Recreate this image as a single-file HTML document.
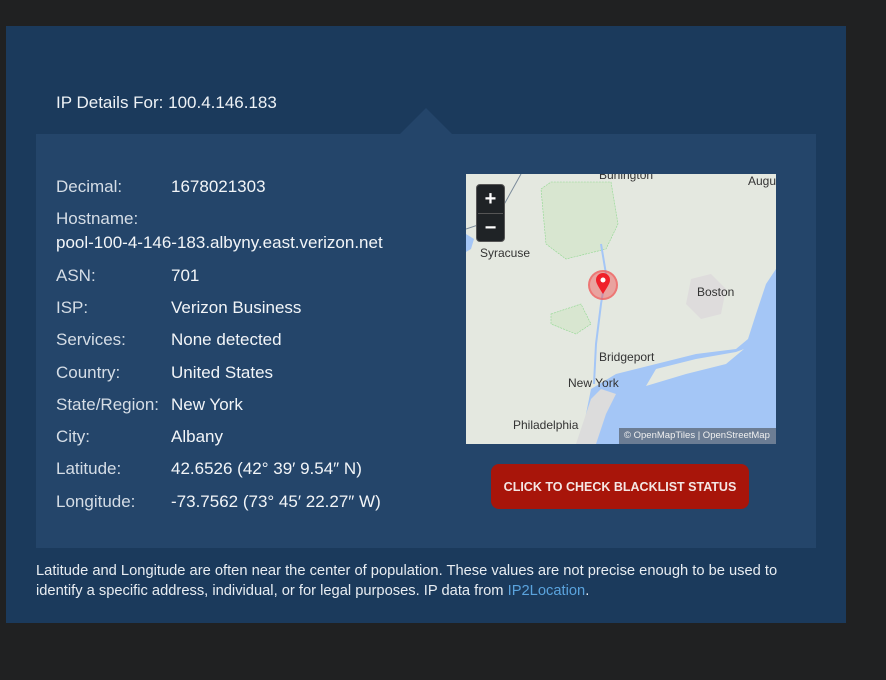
<!DOCTYPE html>
<html><head><meta charset="utf-8"><style>
*{margin:0;padding:0;box-sizing:border-box}
body{width:886px;height:680px;background:#202122;font-family:"Liberation Sans",sans-serif;color:#e6ecf2;position:relative;overflow:hidden}
.panel{position:absolute;left:6px;top:26px;width:840px;height:597px;background:#1b3a5c}
.title{position:absolute;left:56px;top:93px;font-size:17px;color:#eef2f6}
.tri{position:absolute;left:400px;top:108px;width:0;height:0;border-left:26px solid transparent;border-right:26px solid transparent;border-bottom:26px solid #24456a}
.inner{position:absolute;left:36px;top:134px;width:780px;height:414px;background:#24456a}
.r{position:absolute;font-size:17px;white-space:nowrap}
.l{left:56px;color:#d5dde6}
.v{left:171px;color:#f2f5f8}
.map{position:absolute;left:466px;top:174px;width:310px;height:270px;overflow:hidden;background:#e4e8e0}
.btn{position:absolute;left:491px;top:464px;width:258px;height:45px;background:#a8150a;border-radius:8px;color:#f4e6e4;font-weight:bold;font-size:12.5px;text-align:center;line-height:46px}
.note{position:absolute;left:36px;top:561px;width:780px;font-size:14.7px;line-height:20px;color:#e8edf2}
.note span{color:#5aa3dd}
</style></head><body>
<div class="panel"></div>
<div class="title">IP Details For: 100.4.146.183</div>
<div class="tri"></div>
<div class="inner"></div>
<div class="r l" style="top:177px">Decimal:</div><div class="r v" style="top:177px">1678021303</div>
<div class="r l" style="top:209px">Hostname:</div>
<div class="r l" style="top:233px;color:#f2f5f8">pool-100-4-146-183.albyny.east.verizon.net</div>
<div class="r l" style="top:266px">ASN:</div><div class="r v" style="top:266px">701</div>
<div class="r l" style="top:298px">ISP:</div><div class="r v" style="top:298px">Verizon Business</div>
<div class="r l" style="top:330px">Services:</div><div class="r v" style="top:330px">None detected</div>
<div class="r l" style="top:363px">Country:</div><div class="r v" style="top:363px">United States</div>
<div class="r l" style="top:395px">State/Region:</div><div class="r v" style="top:395px">New York</div>
<div class="r l" style="top:427px">City:</div><div class="r v" style="top:427px">Albany</div>
<div class="r l" style="top:459px">Latitude:</div><div class="r v" style="top:459px">42.6526 (42° 39′ 9.54″ N)</div>
<div class="r l" style="top:492px">Longitude:</div><div class="r v" style="top:492px">-73.7562 (73° 45′ 22.27″ W)</div>
<div class="map">
<svg width="310" height="270" viewBox="0 0 310 270">
<path d="M310 95 L300 110 L290 140 L282 165 L270 175 L230 180 L190 190 L150 200 L125 215 L120 240 L115 270 L310 270 Z" fill="#a4c6f6"/>
<path d="M190 195 L230 185 L270 178 L278 175 L260 190 L220 200 L180 212 Z" fill="#e4e8e0"/>
<path d="M125 225 L135 215 L150 220 L140 240 L130 270 L110 270 Z" fill="#dcdcdc"/>
<path d="M225 105 L245 100 L260 115 L255 140 L235 145 L220 130 Z" fill="#dedcdc"/>
<path d="M75 15 L85 8 L145 8 L152 50 L140 75 L100 85 L80 70 Z" fill="#d8e6d0" stroke="#8fd88f" stroke-width="0.6" stroke-dasharray="2 1"/>
<path d="M85 140 L115 130 L125 150 L110 160 L85 150 Z" fill="#d8e6d0" stroke="#8fd88f" stroke-width="0.6" stroke-dasharray="2 1"/>
<path d="M135 70 L140 100 L135 130 L130 170 L128 210" stroke="#a4c6f6" stroke-width="2" fill="none"/>
<path d="M0 55 L30 45 L55 0" stroke="#7a8a9a" stroke-width="1" fill="none"/>
<path d="M0 60 L8 65 L5 75 L0 78 Z" fill="#a4c6f6"/>
</svg>
<div style="position:absolute;left:10px;top:10px;width:29px;height:58px;background:#1f2326;border-radius:4px;border:1px solid #555"></div>
<div style="position:absolute;left:10px;top:11px;width:29px;height:28px;color:#fff;font-weight:bold;font-size:20px;text-align:center;line-height:28px">+</div>
<div style="position:absolute;left:12px;top:39px;width:25px;height:1px;background:#555"></div>
<div style="position:absolute;left:10px;top:40px;width:29px;height:28px;color:#fff;font-weight:bold;font-size:20px;text-align:center;line-height:28px">−</div>
<div style="position:absolute;left:122px;top:96px;width:30px;height:30px;border-radius:50%;background:rgba(240,80,80,.45);border:2px solid rgba(240,90,90,.6)"></div>
<svg style="position:absolute;left:129px;top:99px" width="16" height="22" viewBox="0 0 16 22"><path d="M8 21 C3 13 1 10 1 7 A7 7 0 0 1 15 7 C15 10 13 13 8 21Z" fill="#f0202a"/><circle cx="8" cy="7" r="2.5" fill="#fff"/></svg>
<div style="position:absolute;left:133px;top:-6px;font-size:12px;color:#333">Burlington</div>
<div style="position:absolute;left:282px;top:0px;font-size:12px;color:#333">Augu</div>
<div style="position:absolute;left:14px;top:72px;font-size:12px;color:#333">Syracuse</div>
<div style="position:absolute;left:231px;top:111px;font-size:12px;color:#333">Boston</div>
<div style="position:absolute;left:133px;top:176px;font-size:12px;color:#333">Bridgeport</div>
<div style="position:absolute;left:102px;top:202px;font-size:12px;color:#333">New York</div>
<div style="position:absolute;left:47px;top:244px;font-size:12px;color:#333">Philadelphia</div>
<div style="position:absolute;left:153px;top:254px;width:157px;height:16px;background:rgba(90,100,115,.75);color:#f0f0f0;font-size:9.5px;line-height:16px;padding-left:5px">© OpenMapTiles | OpenStreetMap</div>
</div>
<div class="btn">CLICK TO CHECK BLACKLIST STATUS</div>
<div class="note">Latitude and Longitude are often near the center of population. These values are not precise enough to be used to identify a specific address, individual, or for legal purposes. IP data from <span>IP2Location</span>.</div>
</body></html>
